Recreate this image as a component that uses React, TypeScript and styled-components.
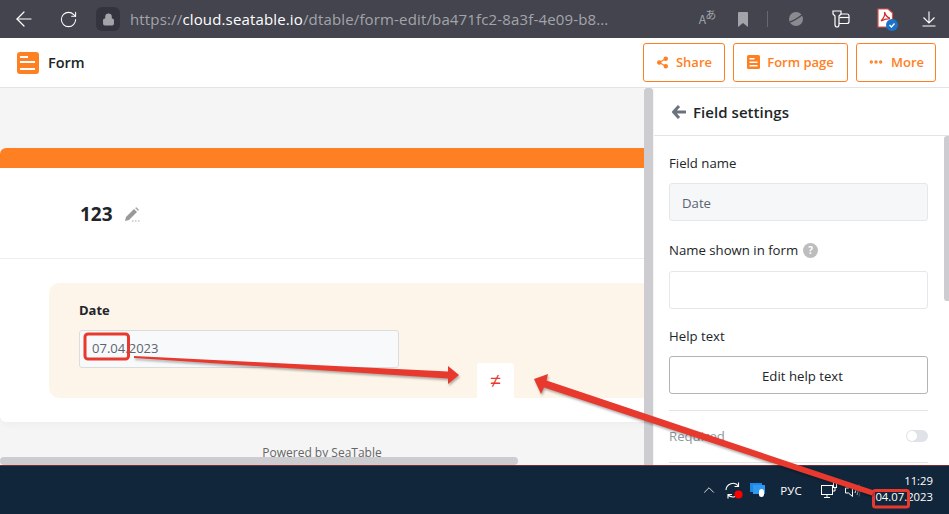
import React from "react";
import styled, { createGlobalStyle } from "styled-components";
import { ArrowLeft, RotateCw, Lock, Share2, MoreHorizontal, ChevronUp } from "lucide-react";

const Global = createGlobalStyle`
  html, body { margin: 0; padding: 0; background: #fff; }
  * { box-sizing: border-box; }
`;

const Page = styled.div`
  position: relative;
  width: 949px;
  height: 514px;
  overflow: hidden;
  display: flex;
  flex-direction: column;
  font-family: "Open Sans", "Noto Sans", sans-serif;
  color: #212529;
`;

const BrowserBar = styled.div`
  height: 38px;
  flex: none;
  background: #43444e;
  display: flex;
  align-items: center;
  padding-left: 12px;
  color: #fff;
`;
const NavIcon = styled.span<{ $gap: number }>`
  display: flex;
  margin-right: ${(p) => p.$gap}px;
`;
const LockBox = styled.span`
  width: 24px;
  height: 24px;
  border-radius: 6px;
  background: #33343d;
  display: flex;
  align-items: center;
  justify-content: center;
  margin-right: 10px;
  color: #a3a4aa;
`;
const Url = styled.div`
  width: 480px;
  font-size: 15px;
  white-space: nowrap;
  overflow: hidden;
  color: #a3a4aa;
  letter-spacing: 0.15px;
  b { font-weight: 400; color: #fff; }
`;
const Tools = styled.div`
  margin-left: 83px;
  display: flex;
  align-items: center;
  height: 100%;
`;
const Tool = styled.span<{ $w: number }>`
  width: ${(p) => p.$w}px;
  display: flex;
  justify-content: center;
  align-items: center;
  position: relative;
`;
const Translate = styled.span`
  color: #a3a4aa;
  font-size: 12px;
  font-family: "Noto Sans CJK JP", sans-serif;
  line-height: 1;
  sup { font-size: 11px; line-height: 0; vertical-align: 5px; margin-left: -1px; }
`;
const ToolSep = styled.span`
  width: 1px;
  height: 16px;
  margin-left: 3px;
  background: #666770;
`;

const AppHeader = styled.header`
  height: 50px;
  flex: none;
  background: #fff;
  border-bottom: 1px solid #e4e4e4;
  display: flex;
  align-items: center;
  padding: 0 13px 0 17px;
`;
const FormTitle = styled.span`
  margin-left: 9px;
  font-size: 14.5px;
  font-weight: 600;
  color: #212529;
`;
const Actions = styled.div`
  margin-left: auto;
  display: flex;
  gap: 8px;
`;
const OrangeButton = styled.div<{ $w: number }>`
  width: ${(p) => p.$w}px;
  height: 39px;
  border: 1px solid #ff8022;
  border-radius: 3px;
  color: #ff8022;
  font-size: 13px;
  font-weight: 600;
  display: flex;
  align-items: center;
  justify-content: center;
  gap: 7px;
  margin-top: -1px;
`;

const Body = styled.div`
  flex: 1;
  min-height: 0;
  display: flex;
  position: relative;
`;
const Canvas = styled.main`
  width: 644px;
  flex: none;
  background: #f5f5f5;
  padding-top: 60px;
  overflow: hidden;
  display: flex;
  flex-direction: column;
`;
const Card = styled.section`
  width: 700px;
  height: 274px;
  flex: none;
  background: #fff;
  border-radius: 6px;
  overflow: hidden;
  box-shadow: 0 2px 8px rgba(0, 0, 0, 0.04);
`;
const CardBand = styled.div`
  height: 20px;
  background: #ff8022;
`;
const CardTitle = styled.div`
  height: 91px;
  padding: 2px 0 0 80px;
  border-bottom: 1px solid #eeeeee;
  display: flex;
  align-items: center;
  gap: 11px;
  font-size: 19px;
  font-weight: 700;
  color: #212529;
`;
const DateBlock = styled.div`
  margin: 24px 0 0 49px;
  height: 115px;
  background: #fef5ea;
  border-radius: 10px;
  padding: 18px 30px;
`;
const DateLabel = styled.div`
  font-size: 13px;
  line-height: 18px;
  font-weight: 700;
  color: #212529;
`;
const DateInput = styled.div`
  margin-top: 11px;
  width: 320px;
  height: 38px;
  background: #f8f9fb;
  border: 1px solid #dcdcdc;
  border-radius: 3px;
  padding: 0 12px 2px;
  display: flex;
  align-items: center;
  font-size: 13.05px;
  color: #5b6470;
`;
const Powered = styled.div`
  margin-top: 23px;
  text-align: center;
  font-size: 12px;
  line-height: 16px;
  color: #666;
`;
const HScroll = styled.div`
  position: absolute;
  left: 0;
  bottom: 0;
  width: 518px;
  height: 8px;
  border-radius: 4px;
  background: #cdccd1;
`;
const VScrollLeft = styled.div`
  width: 9px;
  flex: none;
  background: #cdccd1;
  border-radius: 3px 3px 0 0;
`;
const Gutter = styled.div`
  width: 1px;
  flex: none;
  background: #f5f5f5;
`;

const Panel = styled.aside`
  flex: 1;
  background: #fff;
  position: relative;
  overflow: hidden;
`;
const PanelHead = styled.div`
  height: 48px;
  border-bottom: 1px solid #e4e4e4;
  display: flex;
  align-items: center;
  gap: 6px;
  padding-left: 18px;
  font-size: 15px;
  font-weight: 600;
  letter-spacing: 0.05px;
  color: #212529;
`;
const PanelBody = styled.div`
  padding: 17px 21px 0 15px;
`;
const FieldLabel = styled.div<{ $mt?: number }>`
  margin-top: ${(p) => p.$mt ?? 0}px;
  font-size: 13.2px;
  line-height: 20px;
  color: #212529;
  display: flex;
  align-items: center;
  gap: 5px;
`;
const TextBox = styled.div<{ $filled?: boolean; $mt: number }>`
  margin-top: ${(p) => p.$mt}px;
  height: 38px;
  border: 1px solid #e4e7ec;
  border-radius: 3px;
  background: ${(p) => (p.$filled ? "#f6f7f9" : "#fff")};
  padding: 1px 12px 0;
  display: flex;
  align-items: center;
  font-size: 13.2px;
  color: #5b6470;
`;
const HelpDot = styled.span`
  width: 15px;
  height: 15px;
  border-radius: 50%;
  background: #bdbdbd;
  color: #fff;
  font-size: 10px;
  font-weight: 700;
  display: flex;
  align-items: center;
  justify-content: center;
`;
const PlainButton = styled.div`
  margin-top: 10px;
  height: 38px;
  border: 1px solid #b4b4b4;
  border-radius: 3px;
  padding: 2px 0 0 8px;
  display: flex;
  align-items: center;
  justify-content: center;
  font-size: 13.2px;
  color: #212529;
`;
const Divider = styled.div<{ $mt: number }>`
  margin-top: ${(p) => p.$mt}px;
  height: 1px;
  background: #e4e4e4;
`;
const SwitchRow = styled.div`
  height: 51px;
  padding-bottom: 2px;
  display: flex;
  align-items: center;
  justify-content: space-between;
  font-size: 13.2px;
  color: #8e96a0;
`;
const Toggle = styled.span`
  width: 22px;
  height: 12px;
  border-radius: 6px;
  background: #dfe2e6;
  position: relative;
  &::after {
    content: "";
    position: absolute;
    left: 1px;
    top: 1px;
    width: 10px;
    height: 10px;
    border-radius: 50%;
    background: #fff;
  }
`;
const VScrollRight = styled.div`
  position: absolute;
  top: 48px;
  right: 0;
  width: 5px;
  height: 165px;
  background: #cdccd1;
  border-radius: 3px 0 0 3px;
`;

const Taskbar = styled.footer`
  height: 49px;
  flex: none;
  background: #12263b;
  border-top: 1px solid #7d2a30;
  display: flex;
  align-items: center;
  justify-content: flex-end;
  color: #fff;
  padding-right: 16px;
`;
const Tray = styled.span<{ $w: number }>`
  width: ${(p) => p.$w}px;
  display: flex;
  justify-content: center;
  align-items: center;
  position: relative;
`;
const Lang = styled.span`
  font-size: 11.5px;
  font-weight: 500;
`;
const Clock = styled.div`
  width: 69px;
  margin-top: -2px;
  font-size: 11.3px;
  line-height: 16px;
  text-align: right;
`;

const NotEqualTile = styled.div`
  position: absolute;
  left: 477px;
  top: 363px;
  width: 37px;
  height: 35px;
  background: #fff;
  border-radius: 3px 3px 0 0;
  display: flex;
  align-items: center;
  justify-content: center;
  color: #e8392e;
  font-size: 19px;
  font-family: "Liberation Sans", sans-serif;
`;
const Overlay = styled.svg`
  position: absolute;
  left: 0;
  top: 0;
  pointer-events: none;
`;
const ArrowShape = styled.path`
  fill: #e8392e;
  filter: drop-shadow(1px 2px 1px rgba(0, 0, 0, 0.3));
`;

const FormLogo = () => (
  <svg width="22" height="22" viewBox="0 0 22 22">
    <rect width="22" height="22" rx="3" fill="#ff8022" />
    <rect x="3" y="4" width="8" height="2" fill="#fff" />
    <rect x="3" y="9" width="15" height="2" fill="#fff" />
    <rect x="3" y="16" width="15" height="2" fill="#fff" />
  </svg>
);
const SmallForm = () => (
  <svg width="13" height="14" viewBox="0 0 13 14">
    <rect width="13" height="14" rx="1.5" fill="#ff8022" />
    <rect x="2.5" y="3" width="5" height="1.5" fill="#fff" />
    <rect x="2.5" y="6.5" width="8" height="1.5" fill="#fff" />
    <rect x="2.5" y="10" width="8" height="1.5" fill="#fff" />
  </svg>
);
const Pencil = () => (
  <svg width="16" height="15" viewBox="0 0 16 15">
    <path d="M1 14 L2 10 L10 2 L13 5 L5 13 Z" fill="#999" />
    <path d="M11 1 L12.5 0.3 L15 2.8 L14 4 Z" fill="#aaa" />
    <path d="M8 14h1.5M11 14h1.5M14 14h1.5" stroke="#aaa" strokeWidth="1" />
  </svg>
);
const BackArrow = () => (
  <svg width="15" height="14" viewBox="0 0 15 14">
    <path d="M7 1 L1.5 7 L7 13 M2 7 H14" fill="none" stroke="#6c7380" strokeWidth="3" />
  </svg>
);
const BookmarkIcon = () => (
  <svg width="10" height="15" viewBox="0 0 10 15">
    <path d="M0 1 Q0 0 1 0 H9 Q10 0 10 1 V15 L5 11 L0 15 Z" fill="#a3a4aa" />
  </svg>
);
const Planet = () => (
  <svg width="14" height="14" viewBox="0 0 14 14">
    <circle cx="7" cy="7" r="7" fill="#8a8b90" />
    <path d="M1 10 C5 9 9 6 13 3" stroke="#43444e" strokeWidth="1.5" fill="none" />
  </svg>
);
const Collections = () => (
  <svg width="18" height="18" viewBox="0 0 18 18" fill="none" stroke="#fff" strokeWidth="1.2">
    <path d="M1 1 H9 V4 L7 6 V14.5 Q7 17 5 17 Q3 17 3 14.5 V6 L1 4 Z" />
    <path d="M9 4 H15 Q17 4 17 6 V11.5 Q17 13.5 15 13.5 H7" />
    <path d="M7.5 7.5 H17" />
  </svg>
);
const PdfIcon = () => (
  <svg width="21" height="23" viewBox="0 0 21 23">
    <path d="M1 1 H11 L15.5 5 V19 H1 Z" fill="#fff" stroke="#d9534f" strokeWidth="1.2" />
    <path d="M4 13 C6.5 10.5 8.5 7.5 7.5 4 C8.5 7.5 10.5 9.5 13 10.5 C10 10.5 7 11.5 4 13Z" fill="none" stroke="#d32f2f" strokeWidth="1.3" />
    <circle cx="15" cy="17" r="6" fill="#1a73c9" />
    <path d="M12.5 17 L14.5 19 L17.5 15.5" fill="none" stroke="#fff" strokeWidth="1.3" />
  </svg>
);
const DownloadIcon = () => (
  <svg width="14" height="16" viewBox="0 0 14 16" fill="none" stroke="#fff" strokeWidth="1.1">
    <path d="M7 0.5 V11.5 M1.5 6.5 L7 12 L12.5 6.5 M0.5 15 H13.5" />
  </svg>
);
const SyncIcon = () => (
  <svg width="18" height="17" viewBox="0 0 18 17" fill="none" stroke="#fff" strokeWidth="1.1">
    <path d="M1 8 A7 7 0 0 1 13.5 4 M13.5 0.5 V4.5 H9.5" />
    <path d="M14.5 10 A7 7 0 0 1 3 13 M3 16.5 V12.5 H7" />
    <circle cx="13.5" cy="12.5" r="4" fill="#f00" stroke="none" />
  </svg>
);
const DefenderIcon = () => (
  <svg width="15" height="14" viewBox="0 0 15 14">
    <rect x="0" y="0" width="12" height="9" fill="#1e88e5" />
    <rect x="3" y="2" width="12" height="9" fill="#2f9bf0" />
    <rect x="9" y="6" width="5" height="8" rx="2.5" fill="#fff" />
  </svg>
);
const NetworkIcon = () => (
  <svg width="17" height="17" viewBox="0 0 17 17" fill="none" stroke="#fff" strokeWidth="1">
    <rect x="0.5" y="3.5" width="11" height="9" />
    <path d="M3 15.5 H9 M6 12.5 V15.5" />
    <rect x="12.5" y="0.5" width="3" height="5" />
    <path d="M14 5.5 V9 H11.5" />
  </svg>
);
const SpeakerIcon = () => (
  <svg width="16" height="15" viewBox="0 0 16 15" fill="none" stroke="#fff" strokeWidth="1">
    <path d="M0.5 5 H3.5 L7.5 1.5 V13.5 L3.5 10 H0.5 Z" />
    <path d="M10 5 Q11.5 7.5 10 10" />
    <path d="M12 3 Q14.5 7.5 12 12" stroke="#9aa5b1" />
    <path d="M14 1.5 Q17 7.5 14 13.5" stroke="#4a5a6b" />
  </svg>
);

const App = () => (
  <Page>
    <Global />
    <BrowserBar>
      <NavIcon $gap={23}><ArrowLeft size={24} strokeWidth={1.2} /></NavIcon>
      <NavIcon $gap={18}><RotateCw size={19} strokeWidth={1.3} /></NavIcon>
      <LockBox><Lock size={13} fill="#a3a4aa" strokeWidth={2} /></LockBox>
      <Url>https://<b>cloud.seatable.io</b>/dtable/form-edit/ba471fc2-8a3f-4e09-b8...</Url>
      <Tools>
        <Tool $w={29}><Translate>A<sup>あ</sup></Translate></Tool>
        <Tool $w={42}><BookmarkIcon /></Tool>
        <ToolSep />
        <Tool $w={56}><Planet /></Tool>
        <Tool $w={33}><Collections /></Tool>
        <Tool $w={61}><PdfIcon /></Tool>
        <Tool $w={21}><DownloadIcon /></Tool>
      </Tools>
    </BrowserBar>
    <AppHeader>
      <FormLogo />
      <FormTitle>Form</FormTitle>
      <Actions>
        <OrangeButton $w={82}><Share2 size={13} fill="#ff8022" strokeWidth={2.2} />Share</OrangeButton>
        <OrangeButton $w={115}><SmallForm />Form page</OrangeButton>
        <OrangeButton $w={80}><MoreHorizontal size={16} strokeWidth={3} />More</OrangeButton>
      </Actions>
    </AppHeader>
    <Body>
      <Canvas>
        <Card>
          <CardBand />
          <CardTitle>123 <Pencil /></CardTitle>
          <DateBlock>
            <DateLabel>Date</DateLabel>
            <DateInput>07.04.2023</DateInput>
          </DateBlock>
        </Card>
        <Powered>Powered by SeaTable</Powered>
      </Canvas>
      <HScroll />
      <VScrollLeft />
      <Gutter />
      <Panel>
        <PanelHead><BackArrow />Field settings</PanelHead>
        <PanelBody>
          <FieldLabel>Field name</FieldLabel>
          <TextBox $filled $mt={10}>Date</TextBox>
          <FieldLabel $mt={19}>Name shown in form <HelpDot>?</HelpDot></FieldLabel>
          <TextBox $mt={11}></TextBox>
          <FieldLabel $mt={17}>Help text</FieldLabel>
          <PlainButton>Edit help text</PlainButton>
          <Divider $mt={16} />
          <SwitchRow>Required<Toggle /></SwitchRow>
          <Divider $mt={0} />
        </PanelBody>
        <VScrollRight />
      </Panel>
    </Body>
    <Taskbar>
      <Tray $w={18}><ChevronUp size={24} strokeWidth={1.1} /></Tray>
      <Tray $w={31}><SyncIcon /></Tray>
      <Tray $w={16}><DefenderIcon /></Tray>
      <Tray $w={52}><Lang>РУС</Lang></Tray>
      <Tray $w={24}><NetworkIcon /></Tray>
      <Tray $w={23}><SpeakerIcon /></Tray>
      <Clock>11:29<br />04.07.2023</Clock>
    </Taskbar>
    <NotEqualTile>≠</NotEqualTile>
    <Overlay width="949" height="514" viewBox="0 0 949 514">
      <rect x="85" y="334" width="43.5" height="25" rx="3" fill="none" stroke="#e8392e" strokeWidth="3" />
      <rect x="873.5" y="490.5" width="35" height="16.5" rx="2" fill="none" stroke="#e8392e" strokeWidth="3" />
      <ArrowShape d="M134 356 L448 371.5 L448 366 L459 375 L448 384 L448 378.5 L134 358 Z" />
      <ArrowShape d="M534 379 L548 374 L546.5 380.5 L874 490.5 L872 495.5 L544 387.5 L541 394 Z" />
    </Overlay>
  </Page>
);

export default App;
